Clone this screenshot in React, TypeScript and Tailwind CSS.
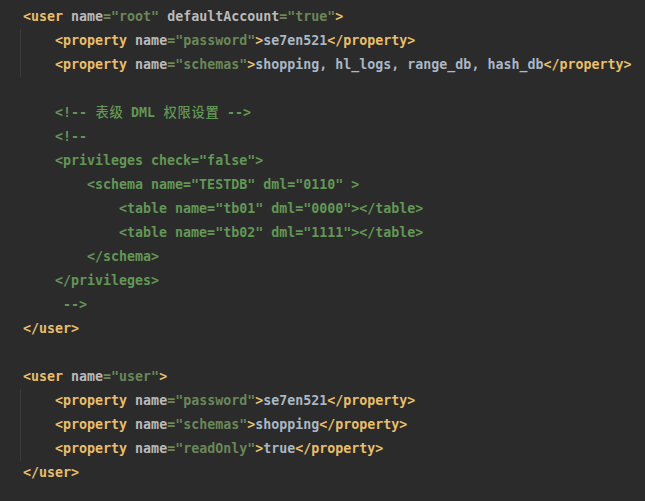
import * as React from 'react';

type Kind = 'tag' | 'attr' | 'eq' | 'val' | 'text' | 'cmt' | 'sp';
type Tok = [Kind, string];

const color: Record<Kind, string> = {
  tag: 'text-[#e8bf6a]',
  attr: 'text-[#bababa]',
  eq: 'text-[#6a8759]',
  val: 'text-[#6a8759]',
  text: 'text-[#a9b7c6]',
  cmt: 'text-[#629755]',
  sp: '',
};

const prop = (name: string, value: string): Tok[] => [
  ['sp', '    '],
  ['tag', '<property'],
  ['sp', ' '],
  ['attr', 'name'],
  ['eq', '='],
  ['val', `"${name}"`],
  ['tag', '>'],
  ['text', value],
  ['tag', '</property>'],
];

const cmt = (s: string): Tok[] => [['cmt', s]];

const lines: { toks: Tok[]; guide?: boolean }[] = [
  {
    toks: [
      ['tag', '<user'],
      ['sp', ' '],
      ['attr', 'name'],
      ['eq', '='],
      ['val', '"root"'],
      ['sp', ' '],
      ['attr', 'defaultAccount'],
      ['eq', '='],
      ['val', '"true"'],
      ['tag', '>'],
    ],
  },
  { toks: prop('password', 'se7en521'), guide: true },
  { toks: prop('schemas', 'shopping, hl_logs, range_db, hash_db'), guide: true },
  { toks: [] },
  { toks: cmt('    <!-- 表级 DML 权限设置 -->') },
  { toks: cmt('    <!--') },
  { toks: cmt('    <privileges check="false">') },
  { toks: cmt('        <schema name="TESTDB" dml="0110" >') },
  { toks: cmt('            <table name="tb01" dml="0000"></table>') },
  { toks: cmt('            <table name="tb02" dml="1111"></table>') },
  { toks: cmt('        </schema>') },
  { toks: cmt('    </privileges>') },
  { toks: cmt('     -->') },
  { toks: [['tag', '</user>']] },
  { toks: [] },
  {
    toks: [
      ['tag', '<user'],
      ['sp', ' '],
      ['attr', 'name'],
      ['eq', '='],
      ['val', '"user"'],
      ['tag', '>'],
    ],
  },
  { toks: prop('password', 'se7en521'), guide: true },
  { toks: prop('schemas', 'shopping'), guide: true },
  { toks: prop('readOnly', 'true'), guide: true },
  { toks: [['tag', '</user>']] },
  { toks: [] },
];

// CJK glyphs are a bit wider than one cell in the editor
function renderText(s: string) {
  const parts = s.split(/([\u4e00-\u9fff])/);
  return parts.map((p, i) =>
    /[\u4e00-\u9fff]/.test(p) ? (
      <span key={i} className="inline-block w-[14px] text-center font-medium">
        {p}
      </span>
    ) : (
      p
    )
  );
}

export default function App() {
  return (
    <div className="w-[645px] h-[501px] overflow-hidden bg-[#2b2b2b] pt-[5px] pl-[20px] font-['DejaVu_Sans_Mono','Noto_Sans_CJK_SC',monospace] text-[13.3px] font-bold">
      {lines.map((line, i) => (
        <div
          key={i}
          className={`h-6 leading-6 whitespace-pre pl-[2px] border-l ${
            line.guide ? 'border-[#3b3b3b]' : 'border-transparent'
          }`}
        >
          {line.toks.map(([k, s], j) => (
            <span key={j} className={color[k]}>
              {renderText(s)}
            </span>
          ))}
        </div>
      ))}
    </div>
  );
}
